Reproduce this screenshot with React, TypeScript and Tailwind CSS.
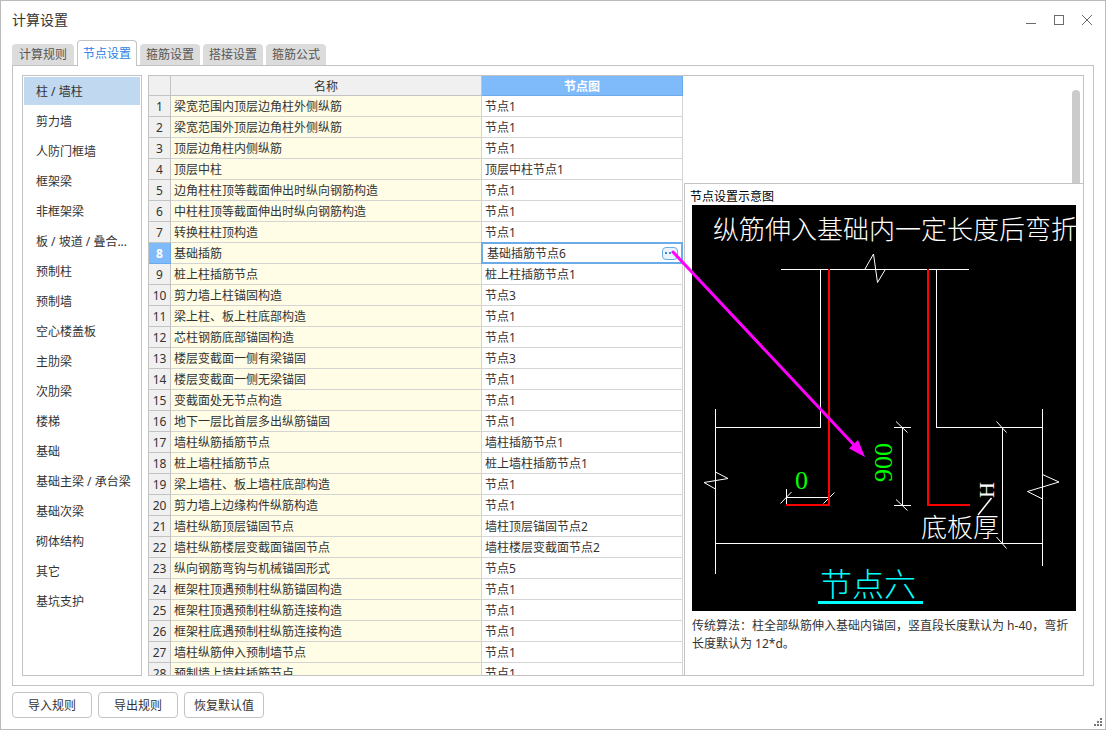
import React, { useState } from 'react';
import clsx from 'clsx';

interface NodeRow {
  name: string;
  node: string;
}

const TABS = ['计算规则', '节点设置', '箍筋设置', '搭接设置', '箍筋公式'];

const CATEGORIES = [
  '柱 / 墙柱',
  '剪力墙',
  '人防门框墙',
  '框架梁',
  '非框架梁',
  '板 / 坡道 / 叠合...',
  '预制柱',
  '预制墙',
  '空心楼盖板',
  '主肋梁',
  '次肋梁',
  '楼梯',
  '基础',
  '基础主梁 / 承台梁',
  '基础次梁',
  '砌体结构',
  '其它',
  '基坑支护',
];

const ROWS: NodeRow[] = [
  { name: '梁宽范围内顶层边角柱外侧纵筋', node: '节点1' },
  { name: '梁宽范围外顶层边角柱外侧纵筋', node: '节点1' },
  { name: '顶层边角柱内侧纵筋', node: '节点1' },
  { name: '顶层中柱', node: '顶层中柱节点1' },
  { name: '边角柱柱顶等截面伸出时纵向钢筋构造', node: '节点1' },
  { name: '中柱柱顶等截面伸出时纵向钢筋构造', node: '节点1' },
  { name: '转换柱柱顶构造', node: '节点1' },
  { name: '基础插筋', node: '基础插筋节点6' },
  { name: '桩上柱插筋节点', node: '桩上柱插筋节点1' },
  { name: '剪力墙上柱锚固构造', node: '节点3' },
  { name: '梁上柱、板上柱底部构造', node: '节点1' },
  { name: '芯柱钢筋底部锚固构造', node: '节点1' },
  { name: '楼层变截面一侧有梁锚固', node: '节点3' },
  { name: '楼层变截面一侧无梁锚固', node: '节点1' },
  { name: '变截面处无节点构造', node: '节点1' },
  { name: '地下一层比首层多出纵筋锚固', node: '节点1' },
  { name: '墙柱纵筋插筋节点', node: '墙柱插筋节点1' },
  { name: '桩上墙柱插筋节点', node: '桩上墙柱插筋节点1' },
  { name: '梁上墙柱、板上墙柱底部构造', node: '节点1' },
  { name: '剪力墙上边缘构件纵筋构造', node: '节点1' },
  { name: '墙柱纵筋顶层锚固节点', node: '墙柱顶层锚固节点2' },
  { name: '墙柱纵筋楼层变截面锚固节点', node: '墙柱楼层变截面节点2' },
  { name: '纵向钢筋弯钩与机械锚固形式', node: '节点5' },
  { name: '框架柱顶遇预制柱纵筋锚固构造', node: '节点1' },
  { name: '框架柱顶遇预制柱纵筋连接构造', node: '节点1' },
  { name: '框架柱底遇预制柱纵筋连接构造', node: '节点1' },
  { name: '墙柱纵筋伸入预制墙节点', node: '节点1' },
  { name: '预制墙上墙柱插筋节点', node: '节点1' },
];

const SELECTED_ROW = 7;

const TitleBar = () => (
  <header className="flex h-[39px] shrink-0 items-center justify-between pb-0.5 pl-[11px] pr-3">
    <h1 className="text-sm">计算设置</h1>
    <div className="flex gap-4 text-[#6b6b6b]">
      <button type="button" aria-label="最小化">
        <svg className="size-3" viewBox="0 0 12 12" stroke="currentColor" fill="none">
          <path d="M1 9.5H11" />
        </svg>
      </button>
      <button type="button" aria-label="最大化">
        <svg className="size-3" viewBox="0 0 12 12" stroke="currentColor" fill="none">
          <rect x="1.5" y="1.5" width="9" height="9" />
        </svg>
      </button>
      <button type="button" aria-label="关闭">
        <svg className="size-3" viewBox="0 0 12 12" stroke="currentColor" fill="none">
          <path d="M1 1L11 11M11 1L1 11" />
        </svg>
      </button>
    </div>
  </header>
);

// Section of the column foot: rebar, break lines and dimensions
const NodeDiagram = () => (
  <svg
    className="pointer-events-none block h-auto w-full overflow-visible"
    viewBox="0 0 384 406"
    fontFamily="'Noto Sans CJK SC', sans-serif"
    fontWeight="300"
    role="img"
    aria-label="节点六"
  >
    <rect width="384" height="406" fill="#000" />
    <text x="21" y="34" fontSize="26" fill="#fff">纵筋伸入基础内一定长度后弯折</text>

    <g fill="none" stroke="#fff" shapeRendering="crispEdges">
      <path d="M89 64.5H277" />
      <path d="M128.5 64V222.5H23.5" />
      <path d="M244.5 64V222.5H350.5" />
      <path d="M23.5 204V369" />
      <path d="M350.5 204V361" />
      <path d="M23.5 338.5H350.5" />
      <path d="M94.5 284V300M94.5 292.5H137" />
      <path d="M210.5 222.5V300.5M202 222.5H219M202 300.5H219" />
      <path d="M310.5 222.5V338.5" />
    </g>
    <g fill="none" stroke="#fff">
      <path d="M173 64L181.5 49L185.5 77.5L193 65" />
      <path d="M23.5 267L36 273.5L12 277.5L23.5 284" />
      <path d="M350.5 269.5L367 277L335.5 286.5L350.5 294" />
      <path d="M88.5 298.5L99.5 287M131.5 298.5L142.5 287.5" />
      <path d="M204 216.5L215.5 227.5M204 294.5L215.5 305.5" />
      <path d="M304.5 216.5L314.5 227.5M304.5 332L314.5 343.5" />
      <path d="M299.5 293L286 310" strokeWidth="1.5" />
    </g>
    <g fill="none" stroke="#f00" strokeWidth="2">
      <path d="M137 64V300H94" />
      <path d="M236 64V300H278" />
    </g>

    <g fontFamily="'Liberation Serif', serif" fontSize="26" fill="#0f0">
      <text x="103" y="284">0</text>
      <text transform="translate(200 277) rotate(-90)">900</text>
    </g>
    <text
      transform="translate(302 293) rotate(-90)"
      fontFamily="'Liberation Serif', serif"
      fontSize="22"
      fill="#fff"
    >
      H
    </text>
    <text x="229" y="332" fontSize="26" fill="#fff">底板厚</text>
    <text x="128" y="391" fontSize="32" fill="#0ff">节点六</text>
    <rect x="126" y="396" width="105" height="3" fill="#0ff" />

    {/* pointer from the picker button to the editable length */}
    <path d="M-19 47L163 241" stroke="#f0f" strokeWidth="3" strokeLinecap="round" />
    <path d="M173 252L157 243.5L166 235Z" fill="#f0f" />
  </svg>
);

const NodeCell: React.FC<{ row: NodeRow }> = ({ row }) => {
  const [value, setValue] = useState(row.node);

  return (
    <div className="absolute -left-px -top-px bottom-[-1px] right-[-1px] flex items-center border-2 border-[#6aabe8] bg-white pl-1 pr-[3px]">
      <input
        aria-label={row.name}
        className="min-w-0 flex-1 pt-0.5 text-[#333] outline-none"
        value={value}
        onChange={e => setValue(e.target.value)}
      />
      <button
        type="button"
        aria-label="选择节点"
        className="flex h-[13px] w-4 items-center justify-center rounded-sm border border-[#6aabe8] bg-[#eaf4fe]"
      >
        <svg className="h-0.5 w-2.5" viewBox="0 0 10 2" fill="#3a87d8">
          <rect width="2" height="2" />
          <rect x="4" width="2" height="2" />
          <rect x="8" width="2" height="2" />
        </svg>
      </button>
    </div>
  );
};

const NodeTable = () => (
  <table className="w-full table-fixed border-separate border-spacing-0">
    <thead>
      <tr className="h-5 bg-[#f0f0f0]">
        <th className="w-[22px] border-b border-r border-[#c3c3c3] p-0" aria-label="序号" />
        <th className="border-b border-r border-[#c3c3c3] p-0 pt-0.5 font-normal">名称</th>
        <th className="w-[201px] border-b border-r border-[#6aabe8] bg-[#7fbbfb] p-0 pt-0.5 font-bold text-white">
          节点图
        </th>
      </tr>
    </thead>
    <tbody>
      {ROWS.map((row, idx) => {
        const selected = idx === SELECTED_ROW;
        return (
          <tr key={row.name} className="h-[21px]">
            <th
              scope="row"
              className={clsx(
                'border-b border-r p-0 pt-0.5',
                selected
                  ? 'border-[#6aabe8] bg-[#7fbbfb] font-bold text-white'
                  : 'border-[#c3c3c3] bg-[#f0f0f0] font-normal',
              )}
            >
              {idx + 1}
            </th>
            <td className="border-b border-r border-[#d4d4d4] bg-[#fffde6] p-0 pl-[3px] pt-0.5">{row.name}</td>
            <td className="relative border-b border-r border-[#d4d4d4] p-0 pl-[3px] pt-0.5">
              {selected ? <NodeCell row={row} /> : row.node}
            </td>
          </tr>
        );
      })}
    </tbody>
  </table>
);

const App: React.FC = () => {
  const [activeTab, setActiveTab] = useState(1);
  const [category, setCategory] = useState(0);

  return (
    <div className="relative flex h-screen flex-col border border-[#bbb] bg-white font-['Noto_Sans','Noto_Sans_CJK_SC',sans-serif] text-xs text-[#333]">
      <TitleBar />

      <div role="tablist" className="z-10 -mb-px flex h-[26px] shrink-0 items-end gap-[3px] pl-[11px]">
        {TABS.map((tab, idx) => (
          <button
            key={tab}
            type="button"
            role="tab"
            aria-selected={idx === activeTab}
            onClick={() => setActiveTab(idx)}
            className={clsx(
              'w-[60px] rounded-t whitespace-nowrap first:w-[62px]',
              idx === activeTab
                ? 'h-[26px] border border-b-0 border-[#c3c3c3] bg-white text-[#2a82e4]'
                : 'mb-px h-[21px] bg-[#dcdcdc] text-[#555]',
            )}
          >
            {tab}
          </button>
        ))}
      </div>

      <main className="mx-[11px] flex min-h-0 flex-1 gap-1.5 border border-[#c3c3c3] p-[9px]">
        <nav className="flex w-[120px] shrink-0 flex-col gap-0.5 overflow-hidden border border-[#c3c3c3] p-px">
          {CATEGORIES.map((item, idx) => (
            <button
              key={item}
              type="button"
              onClick={() => setCategory(idx)}
              className={clsx(
                'h-7 shrink-0 pl-3 pt-0.5 text-left whitespace-nowrap',
                idx === category && 'bg-[#c1d8f1]',
              )}
            >
              {item}
            </button>
          ))}
        </nav>

        <div className="flex min-w-0 flex-1 border border-[#c3c3c3]">
          <div className="min-w-0 flex-1 overflow-hidden pr-px">
            <NodeTable />
          </div>

          <aside className="relative z-10 flex w-[399px] shrink-0 flex-col">
            <div className="flex h-[107px] shrink-0 justify-end pr-[3px] pt-3.5">
              <div className="w-2 rounded-t-full bg-[#cbcbcb]" />
            </div>
            <section className="flex-1 border-l border-t border-[#c3c3c3] px-[7px]">
              <h2 className="-ml-0.5 flex h-[21px] items-center pt-1 text-black">节点设置示意图</h2>
              <NodeDiagram />
              <p className="pt-1.5 leading-[18px]">
                传统算法：柱全部纵筋伸入基础内锚固，竖直段长度默认为 h-40，弯折长度默认为 12*d。
              </p>
            </section>
          </aside>
        </div>
      </main>

      <footer className="flex shrink-0 gap-1.5 px-[11px] pb-[11px] pt-1.5">
        {['导入规则', '导出规则', '恢复默认值'].map(label => (
          <button
            key={label}
            type="button"
            className="h-[26px] w-20 rounded border border-[#c3c3c3] bg-white pt-0.5"
          >
            {label}
          </button>
        ))}
      </footer>

      <svg className="absolute bottom-[3px] right-[3px] size-2" viewBox="0 0 8 8" fill="#777" aria-hidden="true">
        <path d="M6 0h2v2h-2zM3 3h2v2h-2zM6 3h2v2h-2zM0 6h2v2h-2zM3 6h2v2h-2zM6 6h2v2h-2z" />
      </svg>
    </div>
  );
};

export default App;
